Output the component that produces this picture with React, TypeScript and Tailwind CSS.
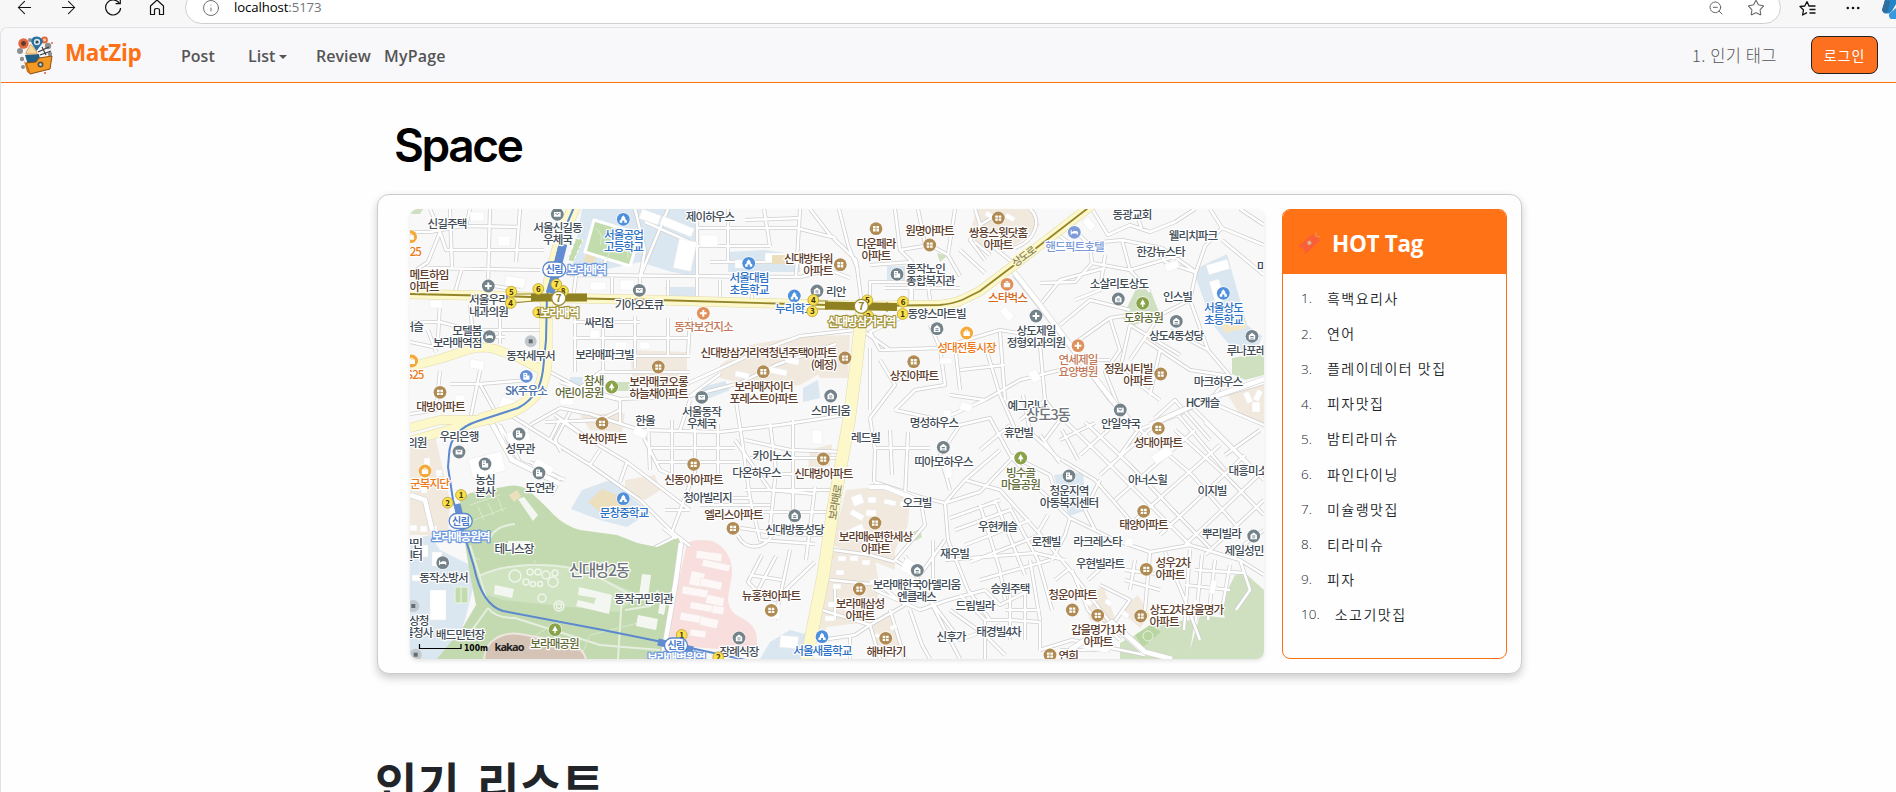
import React from "react";
import { ArrowLeft, ArrowRight, Info, Star, ZoomOut } from "lucide-react";

type Align = "start" | "middle" | "end";
type Label = [x: number, y: number, lines: string, align?: Align];

const MAP_FONT = '"Noto Sans CJK KR", "Noto Sans", sans-serif';

const minorRoads = [
  // north-west blocks
  "M410 232H430L462 226 520 227M430 209 440 232 428 262 410 274M450 209 452 268M490 209 488 285 520 290M466 226 470 209M520 209 516 262M425 268 540 270M440 232 446 250 544 250M462 268 455 292M488 250H540",
  "M410 322H440L470 330 545 330M428 330 436 352M440 303 438 338M470 305 474 345M500 312V344M450 337H505M410 342 438 348M480 371 470 420M440 371 436 410 410 414M480 384 528 380M450 384 480 384 500 420",
  "M575 312V372M603 316V372M635 316V368M668 318V356M573 338H690M573 322H640M603 356H690M690 318 688 356M573 300 576 275 800 277M612 277V300M640 277V300M668 280V300M697 277V303M720 280V303M752 280V303",
  "M635 209 645 250 640 277M668 209 640 277M697 209V277M728 209V262M697 228H800M697 246H770M710 262H800M745 220 800 218M764 209 770 246M800 209 796 277M645 222 690 242M615 232 600 277",
  "M550 372 580 388 620 399 690 396 740 383 776 365 836 344M560 382 595 394 620 400M620 400V424M580 388 600 372 690 372M655 398 700 378 750 355 800 336 855 330M690 396 720 374",
  "M560 408 590 414 640 430 720 432 780 425 845 415M570 412 555 440 561 452M530 425 560 408M620 410 600 420 545 422M690 400 680 430M735 395 742 440 750 498",
  // center blocks
  "M510 415 550 440 590 465 640 500 672 532M555 415 590 440 627 462 690 510M590 440 560 420 550 440M627 462 620 482M590 465 600 450M640 430 660 470 690 484M648 424 650 470M672 420V484M695 428V484M718 424V484M650 448H735M655 462H740M745 440 790 450 845 452M690 484 672 532M672 532 690 546M690 510H665M750 498H690M750 498 760 540 815 544",
  "M735 440 770 490 815 494M770 424 776 470 770 528M793 420V525M750 458H840M760 474H838M745 490H835M750 512H835M740 528 780 534 830 535M815 487 806 560M700 505H770M738 536C745 550 765 552 775 530M762 555 748 582 762 596M776 556 758 590M790 550 775 620M756 590 775 600 815 562M750 575 782 580",
  "M682 543 674 580 664 640M682 543 663 528M675 537 650 550 617 538M565 480 520 462 500 425M530 462 560 478 552 495M498 424 512 460",
  // north-center blocks
  "M800 229 836 238M810 209 830 235 856 260 862 305M839 209 848 245 858 270M895 209 900 250 912 262 910 305M870 265 912 262M900 250 930 245 948 255M918 209 925 245M955 209 948 255 960 276M870 300V282H912V302M885 288H960M925 262 930 300M850 278 830 270 800 277M960 250 985 273M975 209 985 240 1012 262",
  "M1030 209C1042 220 1036 240 1015 248M985 260 970 240 980 225 1000 213M990 255 975 242M1052 230 1072 245 1122 240 1162 248M1065 222 1090 245 1092 263 1075 282 1040 283M1092 209 1108 235 1130 225 1150 232 1175 222 1195 209M1092 263 1130 270 1180 255M1122 240 1130 270 1150 292M1105 255 1100 290 1075 300M1162 248 1196 272M1135 209 1142 230",
  "M1210 209 1222 228 1205 246 1196 272 1190 300 1208 350 1230 376M1222 228 1264 245M1240 209 1264 225M1222 240 1264 275M1195 272 1165 262 1160 250M1190 300 1160 315 1130 360M1170 330 1208 350",
  // east side
  "M1014 275 1038 305 1080 360 1110 400 1138 430M1040 305 1060 280 1105 268M1060 325 1090 300 1130 310M1072 345 1110 318 1150 312M1110 318 1120 350 1105 372 1118 405M1145 340 1190 370 1230 376M1130 325 1180 355M1130 325 1120 370 1160 400M1080 360 1110 360M1160 350 1150 395",
  "M900 318 870 332 880 350 940 348 1000 330 1030 335M862 330 890 350M940 348 945 385 915 390 895 410M930 325 940 348M870 348V410M880 360 895 385 870 418M895 410 940 420 985 400 1020 380 1060 370M985 345 1000 395 1020 440M1000 332 1005 400M1040 345 1045 400 1020 420M1045 400 1060 420 1045 440M950 395 985 400M955 345 960 390M960 370 1005 365",
  "M1138 430 1178 415 1205 400 1264 383M1138 430 1120 455M1155 418 1175 400 1210 440M1205 400 1264 425M1178 415 1225 470M1190 405 1250 465M1230 376 1210 400M1260 430 1225 455",
  // south-east grid
  "M1062 418 1105 460 1150 505 1190 545M1085 422 1130 465 1175 512 1210 548M1140 430 1192 475 1240 530M1175 430 1225 475 1264 515M1205 422 1264 480M1062 460 1095 480 1130 520M1060 440 1095 423M1080 455 1125 415M1100 475 1160 420M1115 500 1195 430M1135 520 1220 445M1160 535 1245 455M1185 545 1264 470M1205 555 1264 500M1230 555 1264 530",
  "M1023 395 1030 432 1060 460M1040 435 1060 463M1062 430 1078 460M1100 480 1085 510 1095 530M1070 518 1115 540 1150 552 1190 545 1240 560 1264 575M1150 552 1145 610M1135 560 1130 590M1165 552 1185 600 1200 640M1190 550 1184 630M1202 555 1196 620M1215 560 1208 620M1230 565 1221 615M1185 585 1230 590M1195 570 1245 573M1125 570 1165 575M1125 580 1160 590M1240 560 1250 590 1236 610",
  // south-center
  "M874 482 920 497 945 503 980 492 1015 455M870 418 875 450 874 482M890 430 892 475M908 432 905 497M874 448H930M945 503 965 480 1000 450M950 490 940 455 960 425 990 418 1010 455M980 450 1010 425M965 480 1000 490 1038 532 1070 570 1112 625 1145 655M1010 455 1040 490 1070 518M1010 455 1050 475 1060 505",
  "M945 503 948 540 968 590 990 620M955 530 1010 510M950 518 1000 500M980 505 1000 570 1005 600M995 500 1025 575M965 545 1030 520M970 562 1040 535M980 580 1050 560M1010 508 1038 560 1052 610M1030 560 1040 620M1048 515 1038 532M1070 518 1065 535 1052 560M1065 560 1035 553 945 560M1070 568 1055 580",
  "M920 497 925 525 895 560 920 575 945 540M905 556 930 600 950 640 960 659M933 540V580M875 590 920 610 948 600 985 590M910 610 922 645 930 659M950 610 985 635 1005 655M960 595 985 620 1010 620 1040 622V650M930 600 960 640 1000 625M985 590 1000 605 1030 590M985 620 985 659M1010 590V640M1025 590V640M1040 650 1072 640 1145 655M1005 610 1040 610",
  "M834 550 870 555 895 562M830 580 880 585 905 605M822 610 870 625 905 605M822 640 855 635 870 625M870 625 880 659M890 610 905 659M850 635V659M835 585V620M1072 570 1088 610 1120 640M1088 580 1110 560M1100 585 1130 600 1112 625M1110 650H1060",
];

const majorWhite = [
  "M1014 272 1040 305 1085 365 1112 400 1138 430",
  "M490 420 512 460 560 484",
  "M681 543 676 580 664 650",
  "M1264 379 1205 400 1150 425",
  "M869 487 885 487 920 501",
  "M410 495 425 500 432 530",
  "M1070 650 1112 622 1145 652 1172 659",
];

const blueAreas = [
  "M582 209H695V276L672 272 640 262 570 277Z",
  "M728 252 765 250 800 255V272H728Z",
  "M665 287H695V300H668Z",
  "M887 266H905V281H887Z",
  "M1193 270 1227 254 1247 325 1262 336 1256 352 1232 348 1213 325Z",
  "M571 509 582 490 610 480 650 512 627 527 600 520Z",
  "M410 540 430 535 440 550 470 565 475 580 465 620 450 659H410Z",
  "M1054 475 1083 472 1086 510 1070 516 1060 500Z",
  "M770 642 790 630 812 636 808 659H760Z",
  "M698 388 725 381 730 390 705 400Z",
  "M570 377 583 377 582 386 570 384Z",
  "M803 388 818 380 820 398 803 402Z",
];

const beigeAreas = [
  "M630 350 687 352V387L645 388 632 375Z",
  "M720 365 750 345 795 337 840 338 835 365 800 385 760 387 720 378Z",
  "M800 336 850 335 848 378 820 378Z",
  "M976 209H1030L1040 225 1010 250 980 248 970 235Z",
  "M410 440 435 435 450 500 448 535H410Z",
  "M846 490 876 487 910 500 908 525 895 550 895 570 832 545Z",
  "M832 550 875 560 880 590 868 622 818 628Z",
  "M866 625 890 610 902 645 885 659Z",
  "M810 450 832 444 830 466 808 468Z",
  "M580 415 625 413 622 432 590 430Z",
  "M625 480 655 475 660 490 645 500 625 490Z",
  "M1225 390 1264 380V428L1240 415Z",
  "M1080 590 1104 588 1120 632 1090 620Z",
  "M1120 610 1138 595 1150 615 1140 628Z",
  "M818 590 830 600 826 630 812 628Z",
];

const greenAreas = [
  "M410 209H423L420 214H410Z",
  "M1232 358 1264 353V375L1245 380 1232 374Z",
  "M1120 659V643L1160 622 1195 620 1190 650 1200 615 1225 618 1220 605 1235 575 1245 573 1264 590V659Z",
  "M1136 289H1150L1160 315 1132 326 1122 318Z",
  "M937 253 947 256 940 262Z",
  "M913 532 920 529 922 537 915 541Z",
  "M614 382H630V391H614Z",
];

const buildings: [number, number, number, number, number?][] = [
  [660, 222, 34, 9, 22], [676, 240, 18, 30, 12], [640, 212, 20, 10, 20], [700, 235, 18, 12],
  [470, 212, 14, 9], [498, 236, 12, 10], [430, 300, 12, 8], [505, 277, 20, 10, 8], [590, 282, 16, 8],
  [620, 280, 14, 10], [765, 253, 26, 9], [735, 260, 18, 8], [590, 330, 10, 9], [615, 342, 12, 8],
  [640, 342, 10, 7], [470, 360, 14, 9, 10], [455, 395, 10, 8], [560, 395, 14, 10], [500, 398, 14, 12, 20],
  [470, 455, 34, 20, -14], [508, 430, 22, 16, -14], [532, 462, 20, 15, 30], [633, 428, 14, 9, 25],
  [730, 392, 20, 8, -10], [745, 350, 14, 6, 12], [765, 352, 14, 6, 12], [785, 358, 14, 6, 12], [765, 368, 22, 6, 12],
  [735, 372, 14, 6, 12], [1207, 262, 22, 10, -16], [1212, 280, 10, 22, -16], [1165, 262, 14, 8, -20],
  [1085, 218, 8, 12, -40], [1060, 245, 8, 6, -40], [985, 213, 10, 5, 30], [1005, 215, 10, 5, 30], [982, 235, 10, 5, 15],
  [1015, 228, 10, 5, 15], [1245, 392, 6, 11, -25], [1255, 390, 6, 11, 25], [1252, 402, 8, 10],
  [852, 495, 11, 10, -20], [850, 512, 14, 6, 30], [868, 497, 8, 6], [884, 500, 12, 5, 12], [900, 502, 8, 5, 12],
  [866, 510, 10, 6], [846, 527, 18, 7, -25], [838, 556, 8, 5], [850, 556, 8, 5], [862, 560, 8, 5], [836, 570, 8, 5],
  [833, 584, 8, 5], [852, 586, 14, 5, 12], [870, 580, 7, 5], [828, 602, 8, 5], [843, 605, 8, 5], [825, 616, 9, 5],
  [1085, 600, 7, 5, 35], [1105, 600, 7, 5, 35], [1122, 612, 7, 5, 35], [1092, 612, 7, 5, 35], [875, 634, 7, 4, 25], [890, 625, 7, 4, -35],
  [410, 525, 7, 6], [420, 526, 7, 6], [430, 526, 7, 6], [413, 485, 6, 6], [421, 487, 6, 6], [436, 470, 6, 6], [424, 458, 6, 14],
  [420, 545, 8, 12], [432, 552, 10, 14], [430, 590, 16, 30], [412, 575, 24, 6], [780, 636, 18, 12, 5],
  [943, 410, 8, 10], [960, 403, 12, 8, 15], [940, 358, 12, 6], [1000, 310, 14, 8, 50], [1030, 370, 9, 12, -30],
  [1125, 538, 8, 8], [1152, 450, 20, 10, -35], [902, 560, 14, 14, 30], [1084, 635, 26, 16, 10], [1192, 600, 6, 16, 12], [1210, 580, 6, 14, 12],
  [770, 605, 10, 14], [820, 555, 8, 12], [812, 430, 10, 14], [945, 466, 7, 12], [960, 300, 10, 7, -30],
];

const hospitalBlocks: [number, number, number, number, number?][] = [
  [696, 552, 26, 8, 8], [702, 562, 28, 7, 12], [690, 572, 14, 14, 12], [682, 588, 26, 8, 10], [700, 580, 22, 8, 12],
  [706, 596, 18, 9, 12], [690, 604, 28, 7, 10], [680, 614, 24, 8, 10], [700, 618, 18, 9, 12], [712, 606, 12, 8, 10], [690, 630, 16, 7, 8],
];

const labelGroups: { fill: string; labels: Label[] }[] = [
  {
    fill: "#414c57",
    labels: [
      [447, 223.3, "신길주택", "middle"], [557.5, 227.5, "서울신길동|우체국"], [710, 217, "제이하우스"],
      [488.5, 300, "서울우리|내과의원"], [639, 305, "기아오토큐"], [599, 322.5, "싸리집"], [423, 326.5, "허슬", "end"],
      [481.5, 330.5, "모텔봄|보라매역점", "end"], [530.5, 355.5, "동작세무서"], [604.5, 354.5, "보라매파크빌"],
      [701.5, 411.5, "서울동작|우체국"], [830.5, 410.5, "스마티움"], [1132, 214.5, "동광교회"], [1193, 236, "웰리치파크"],
      [1160.5, 251.5, "한강뉴스타"], [906, 268.5, "동작노인|종합복지관", "start"], [826, 291.5, "리안", "start"],
      [1119, 283.5, "소살리토상도"], [1177.5, 296.5, "인스빌"], [1176, 335.5, "상도4동성당"], [1226.5, 351, "루나포레", "start"],
      [1257, 267, "마음", "start"], [907.5, 313.5, "동양스마트빌", "start"], [1036, 330.5, "상도제일|정형외과의원"],
      [1218, 381.5, "마크하우스"], [1202.5, 402.5, "HC캐슬"], [1027, 405.5, "예그리나"], [645, 420.5, "한울"],
      [459, 436.5, "우리은행"], [426.5, 443, "의원", "end"], [520, 448.5, "성무관"], [485, 479.5, "농심|본사"],
      [539.5, 488, "도연관"], [772, 456, "카이노스"], [756.5, 472.5, "다온하우스"], [707.5, 498, "청아빌리지"],
      [794.5, 530, "신대방동성당"], [422, 543.5, "구민|센터", "end"], [514, 549, "테니스장"], [443.5, 577.5, "동작소방서"],
      [643.5, 599, "동작구민회관"], [428.5, 621, "상청", "end"], [432.5, 632.5, "를청사", "end"], [460, 635, "배드민턴장"],
      [739, 651.5, "장례식장"], [865.5, 437.5, "레드빌"], [934, 422.5, "명성하우스"], [1018.5, 432.5, "휴먼빌"],
      [1120.5, 424, "안일약국"], [943.5, 461.5, "띠아모하우스"], [1069, 491, "청운지역|아동복지센터"], [1147.5, 479.5, "아너스힐"],
      [1228.5, 470.5, "대흥미소", "start"], [1212, 491, "이지빌"], [917, 502.5, "오크빌"], [997.5, 526.5, "우현캐슬"],
      [1046, 541.5, "로젠빌"], [1097.5, 541.5, "라크레스타"], [1221.5, 533.5, "뿌리빌라"], [1224.5, 550.5, "제일성민", "start"],
      [954.5, 553.5, "재우빌"], [1100, 563.5, "우현빌라트"], [916.5, 585, "보라매한국아델리움|엔클래스"], [1010, 588.5, "승원주택"],
      [975, 605.5, "드림빌라"], [951, 637, "신후가"], [998.5, 631.5, "태경빌4차"],
    ],
  },
  {
    fill: "#5d3d2c",
    labels: [
      [832.5, 259, "신대방타워|아파트", "end"], [409.5, 275, "메트하임|아파트", "start"], [836.5, 352.5, "신대방삼거리역청년주택아파트|(예정)", "end"],
      [658.5, 381.5, "보라매코오롱|하늘채아파트"], [440.5, 407, "대방아파트"], [763.5, 386.5, "보라매자이더|포레스트아파트"],
      [876, 243.5, "다운페라|아파트"], [929.5, 230.5, "원명아파트"], [998, 232.5, "쌍용스윗닷홈|아파트"], [1152.5, 368.5, "정원시티빌|아파트", "end"],
      [914, 376, "상진아파트"], [602.5, 438.5, "벽산아파트"], [693.5, 479.5, "신동아아파트"], [852.5, 473.5, "신대방아파트", "end"],
      [733.5, 514.5, "엘리스아파트"], [771, 595.5, "뉴홍현아파트"], [1158, 443, "성대아파트"], [1143.5, 525, "태양아파트"],
      [875.5, 537, "보라매e편한세상|아파트"], [1155.5, 563, "성우2차|아파트", "start"], [1072.5, 594.5, "청운아파트"],
      [1149.5, 610, "상도2차갑을명가|아파트", "start"], [860, 603.5, "보라매삼성|아파트"], [1098, 630, "갑을명가1차|아파트"],
      [886, 652, "해바라기"], [1058.5, 655.5, "연희", "start"],
    ],
  },
  {
    fill: "#2c70c6",
    labels: [
      [623.5, 234.5, "서울공업|고등학교"], [749, 278, "서울대림|초등학교"], [775, 309, "누리학교", "start"], [1223.5, 308, "서울상도|초등학교"],
      [624, 512.5, "문창중학교"], [851.5, 651, "서울새롬학교", "end"],
    ],
  },
  { fill: "#4a6fa8", labels: [[526, 390.7, "SK주유소"]] },
  { fill: "#7c9ad8", labels: [[1074.5, 247, "핸드픽트호텔"]] },
  { fill: "#c27958", labels: [[703.5, 327, "동작보건지소"], [1078, 360, "연세제일|요양병원"]] },
  { fill: "#d5681c", labels: [[1007.5, 297.5, "스타벅스"]] },
  { fill: "#ec7a1a", labels: [[966.5, 347.5, "성대전통시장"], [410, 484, "군복지단", "start"], [421, 251.5, "S25", "end"], [423.5, 375, "S25", "end"]] },
  { fill: "#5f6b38", labels: [[603.5, 381, "참새|어린이공원", "end"], [1143.5, 317.5, "도화공원"], [1020.5, 473, "빙수골|마을공원"], [554.5, 644, "보라매공원"]] },
];

type Kind = "apt" | "school" | "plus" | "home" | "office" | "tree" | "bag" | "bed" | "mail";

const pinGroups: { fill: string; kind: Kind; at: [number, number][] }[] = [
  {
    fill: "#b08c54", kind: "apt",
    at: [[658.3, 367], [440, 392.3], [763.3, 371.7], [876, 228.7], [929.7, 245], [998.3, 218], [840.3, 264.7], [1160.7, 374], [913.7, 361.7], [845, 358], [602, 423.3], [693.7, 464.3], [823.3, 459], [733, 528.3], [771.3, 610.3], [1158.3, 428.3], [1143.7, 511.3], [875, 523], [1146.3, 569.3], [859.3, 589], [1072.3, 610], [1097.7, 615.3], [1140.7, 616], [885.7, 638.3], [1050, 655]],
  },
  { fill: "#4f8fdc", kind: "school", at: [[623.3, 219.3], [748.7, 263.3], [794.3, 296], [1223.3, 293.3], [623.3, 498.7], [822, 636.7]] },
  { fill: "#74828a", kind: "plus", at: [[488.3, 286], [1036, 316]] },
  { fill: "#e0905c", kind: "plus", at: [[703.3, 313.3], [1078, 345.7]] },
  { fill: "#e0905c", kind: "bag", at: [[1007, 284.3]] },
  { fill: "#f4aa3a", kind: "bag", at: [[410.7, 236.7], [411.7, 361], [966.7, 333], [425, 471]] },
  { fill: "#74828a", kind: "home", at: [[817, 291], [937, 328.7], [1118.3, 299], [1176.3, 321.3], [1252, 336.3], [830.7, 396], [943.3, 447.3], [917.3, 570.3], [794.7, 515.7], [1253.7, 536], [739, 638]] },
  { fill: "#74828a", kind: "office", at: [[897, 274.3], [519, 434], [485, 464], [539, 473], [1069, 476]] },
  { fill: "#74828a", kind: "mail", at: [[557.3, 214.3], [639.3, 290.3], [701.7, 397.3], [459, 452], [1120.3, 410]] },
  { fill: "#74828a", kind: "bed", at: [[489.3, 336.7], [442.7, 562.7]] },
  { fill: "#7f9cda", kind: "bed", at: [[1074.3, 232.3]] },
  { fill: "#6691d6", kind: "office", at: [[526.3, 376.3]] },
  { fill: "#8aa24a", kind: "tree", at: [[611.7, 387], [1142.7, 303.3], [1020.7, 458], [555, 629.7]] },
];

const glyphs: Record<Kind, React.ReactNode> = {
  apt: <path d="M-3-2.6h2.6v2.3H-3zM.4-2.6H3v2.3H.4zM-3 .4h2.6v2.3H-3zM.4.4H3v2.3H.4z" />,
  school: <path d="M0-4 2-1.6V0l1.6 1.2V3.4H1V1.2H-1V3.4H-3.6V1.2L-2 0V-1.6Z" />,
  plus: <path d="M-1-3.4H1V-1H3.4V1H1V3.4H-1V1H-3.4V-1H-1Z" />,
  home: <path fillRule="evenodd" d="M0-3.6 3.2-1V3.2H-3.2V-1ZM-1.6-.4V.6H1.6V-.4ZM-1.6 1.4V2.2H1.6V1.4Z" />,
  office: <path fillRule="evenodd" d="M-3-3.4H1V-.8H3.2V3.4H-3ZM-1.8-2.2V-1.2H-.4V-2.2ZM-1.8 0V1H-.4V0Z" />,
  tree: <path d="M0-4 2.8 1.2H.7V3.6H-.7V1.2H-2.8Z" />,
  bag: <path fillRule="evenodd" d="M-3.2-1.4H-1.8L-1-3.2H1L1.8-1.4H3.2V3H-3.2ZM-.8-1.4H.8L.4-2.4H-.4Z" />,
  bed: <path d="M-3.6-2.2h1V0L-.6-1.4H2.4L3.6-.2V2.4H2.6V1.2H-2.6V2.4H-3.6Z" />,
  mail: <path fillRule="evenodd" d="M-3.4-2.2H3.4V2.4H-3.4ZM-2.4-1.2 0 .8 2.4-1.2 1.4-1.4 0-.4-1.4-1.4Z" />,
};

const exits: [number, number, string][] = [
  [511.3, 291.7, "5"], [510.7, 303, "4"], [538.3, 289, "6"], [563, 291, "8"], [556.3, 284.3, "7"], [538.3, 312.3, "1"],
  [813.3, 300, "4"], [812.3, 311.3, "3"], [867.3, 300.3, "5"], [868.3, 316, "2"], [903, 301.7, "6"], [902.7, 314, "1"],
  [461, 495, "1"], [447.7, 502.7, "2"], [681.7, 635, "1"], [718.3, 657.3, "2"],
];

const YELLOW_EW = "M410 294 500 296 560 298 656 300 793 304 862 306 940 305Q952 304 962 300L980 291 1013 266 1092 205";
const BLUE_ROAD = "M575 205 562 235 550 280 546 310 546 360Q545 378 539 389 530 402 516 409L480 420";
const YELLOW_W = "M410 428 440 420 490 420 520 408M410 441 455 428 510 414 528 403M410 367 443 358 470 349Q483 346 495 349L517 357 542 370";
const YELLOW_NS = "M862 310 856 367 849 420 833 510 823 577 806 662";
const BLUE_LINE = "M575 205 562 235 547 295 546 340 543 370Q541 384 537 390 530 402 518 408L478 421Q450 430 449 455L448 467 453 500 465 537 474 567Q482 605 503 611L603 630 677 645 750 661";

function TextBlock({ x, y, lines, align = "middle" }: { x: number; y: number; lines: string; align?: Align }) {
  return (
    <text textAnchor={align} y={y + 4.4}>
      {lines.split("|").map((line, i) => (
        <tspan key={i} x={x} y={y + 4.4 + i * 11.8}>{line}</tspan>
      ))}
    </text>
  );
}

function Boxes({ items, fill, stroke }: { items: [number, number, number, number, number?][]; fill: string; stroke: string }) {
  return (
    <g fill={fill} stroke={stroke} strokeWidth="0.5">
      {items.map(([x, y, w, h, r = 0], i) => (
        <rect key={i} x={x} y={y} width={w} height={h} transform={`rotate(${r} ${x + w / 2} ${y + h / 2})`} />
      ))}
    </g>
  );
}

function LineBadge({ x, y }: { x: number; y: number }) {
  return (
    <g>
      <rect x={x - 11.5} y={y - 7.5} width="23" height="15" rx="7.5" fill="#fff" stroke="#5b86cc" strokeWidth="1.3" />
      <text x={x} y={y + 3.8} textAnchor="middle" fontSize="10" fontWeight="700" fill="#4a7bc8" letterSpacing="-0.6">신림</text>
    </g>
  );
}

function KakaoMap() {
  return (
    <svg viewBox="410 209 854 450" className="block h-[450px] w-[854px] shrink-0 rounded-lg bg-[#f8f8f8] shadow-[0_2px_4px_rgba(0,0,0,0.1)]" fontFamily={MAP_FONT}>
      <rect x="410" y="209" width="854" height="450" fill="#f8f8f8" />
      <g fill="#dae6f0">{blueAreas.map((d) => <path key={d} d={d} />)}</g>
      <g fill="#f1e9de">{beigeAreas.map((d) => <path key={d} d={d} />)}</g>
      <g fill="#cfe0c1">{greenAreas.map((d) => <path key={d} d={d} />)}</g>
      <path d="M687 543Q697 538 712 541 733 550 732 575L728 597Q728 612 740 617 757 625 757 640V652L665 645 672 610Z" fill="#f8dfdd" />

      <g fill="none" strokeLinejoin="round">
        <g stroke="#cecece" strokeWidth="4">{minorRoads.map((d) => <path key={d} d={d} />)}</g>
        <g stroke="#fff" strokeWidth="2.5">{minorRoads.map((d) => <path key={d} d={d} />)}</g>
      </g>
      <Boxes items={buildings} fill="#fff" stroke="#e9e9e9" />
      <Boxes items={hospitalBlocks} fill="#fdf8f7" stroke="#eadfdd" />

      {/* school field */}
      <path d="M594 220 640 234 630 266 585 252Z" fill="#c3dcae" stroke="#fff" strokeWidth="3" strokeLinejoin="round" />
      <path d="M618 227 607 259M596 229q8 4 4 16M634 240q-8 4-6 18" fill="none" stroke="#dbeacf" />
      <path d="M576 238 583 240 573 262 568 260Z" fill="#c3dcae" stroke="#fff" strokeDasharray="4 2" />
      <path d="M586 254 596 257 593 264 584 261Z" fill="#ecdfbd" />
      <path d="M772 255H785V264H772Z" fill="#ecdfbd" />
      <path d="M588 502 602 489 630 500 620 518 600 512Z" fill="#ecdfbd" />
      <path d="M1220 325 1244 318 1246 328 1226 333Z" fill="#f5e7c4" />

      {/* park */}
      <path d="M460 500 470 493 503 487Q517 483 528 490 545 505 553 514 565 526 580 530L617 535 637 543 657 547 678 538 682 545 676 580 664 640 660 659H437L463 627 476 605 470 575 465 543Z" fill="#c3dab0" />
      <path d="M479 576Q500 567 530 565 565 563 590 573L640 595 618 612 503 600 487 595Z" fill="#cfe3c0" />
      <g fill="none" stroke="#e6efdf" strokeWidth="2">
        <path d="M479 576Q500 566 530 565 575 564 600 578L640 600M622 595 618 659M488 608 465 640M488 608Q495 618 515 618L600 645 660 650M490 538Q495 526 515 524M470 545 487 600M625 610 650 606 658 590" />
      </g>
      <g fill="none" stroke="#d8e8cc" strokeWidth="1">
        <path d="M470 505 500 495M474 520 506 508M478 507 484 520M488 503 494 516M498 498 503 512M520 645 560 620M580 659 590 635 650 620M480 560 470 555M530 585 535 560" />
      </g>
      <g fill="none" stroke="#f0f5ec" strokeWidth="1.5">
        <circle cx="515" cy="576" r="6" />
        <circle cx="530" cy="572" r="3" /><circle cx="538" cy="572" r="3" /><circle cx="546" cy="575" r="4" />
        <circle cx="555" cy="573" r="3" /><circle cx="526" cy="582" r="3" /><circle cx="533" cy="584" r="2.5" />
        <circle cx="540" cy="584" r="2.5" /><circle cx="553" cy="582" r="5" /><circle cx="542" cy="598" r="4" />
        <circle cx="559" cy="606" r="5" /><circle cx="559" cy="606" r="2.5" />
      </g>
      <g fill="#f4f7f1">
        <path d="M495 585 514 589 512 598 494 594Z" /><path d="M579 587 612 595 609 614 576 606 578 600 594 604 596 598 578 595Z" />
        <path d="M642 574 651 575 648 597 639 596Z" /><path d="M638 615 658 619 656 630 636 626Z" />
        <path d="M518 499 524 497 538 515 533 521Z" /><path d="M660 603 666 605 664 615 658 613Z" /><path d="M508 541H530V550H508Z" />
      </g>
      <path d="M509 495 517 490 521 496 514 502Z" fill="#ecdfbd" />
      <path d="M455 587H468V603H455ZM461 587V603" fill="#c3dcae" stroke="#eef5e8" />
      <path d="M484 660Q485 645 495 639 505 632 520 634L570 643Q585 650 586 660Z" fill="#d5c4b6" stroke="#eee6df" strokeWidth="2" />
      <path d="M1135 635 1150 625 1161 632 1143 647Z" fill="#b9d6a2" />
      <circle cx="1148" cy="636" r="5" fill="none" stroke="#e8f1e0" />

      <g fill="none" strokeLinejoin="round">
        <g stroke="#d4d4d4" strokeWidth="6">{majorWhite.map((d) => <path key={d} d={d} />)}</g>
        <g stroke="#fff" strokeWidth="4.6">{majorWhite.map((d) => <path key={d} d={d} />)}</g>
        <g stroke="#dfd9b0">
          <path d={YELLOW_W} strokeWidth="9.5" /><path d={YELLOW_NS} strokeWidth="13" />
          <path d={BLUE_ROAD} strokeWidth="13" /><path d={YELLOW_EW} strokeWidth="10" />
        </g>
        <g stroke="#fdf8c9">
          <path d={YELLOW_W} strokeWidth="8.5" /><path d={YELLOW_NS} strokeWidth="12" />
          <path d={BLUE_ROAD} strokeWidth="12" /><path d={YELLOW_EW} strokeWidth="9" />
        </g>
        <path d={BLUE_LINE} stroke="#5b88cf" strokeWidth="2" />
        <path d={YELLOW_EW} stroke="#94842a" strokeWidth="1.8" />
        <path d="M563 244 554 280 550 293" stroke="#628dd2" strokeWidth="8.5" />
        <path d="M457 504 463 530" stroke="#628dd2" strokeWidth="7" />
        <path d="M658 642 693 650" stroke="#628dd2" strokeWidth="7" />
        <path d="M513 294H535M513 303 533 301M815 301H828M815 309H828M887 302V312M895 303V311" stroke="#94842a" strokeWidth="1" />
        <path d="M531 297.5H587M825 305.5 897 307" stroke="#8f8021" strokeWidth="8" />
      </g>

      <g>
        {pinGroups.map(({ fill, kind, at }) =>
          at.map(([x, y]) => (
            <g key={`${x}-${y}`} transform={`translate(${x} ${y})`}>
              <circle r="7" fill="#fff" opacity="0.8" />
              <circle r="6.4" fill={fill} />
              <g fill="#fff">{glyphs[kind]}</g>
            </g>
          )),
        )}
        {[[530.7, 341.3], [413.3, 606], [415.7, 654.7]].map(([x, y]) => (
          <g key={x}>
            <circle cx={x} cy={y} r="6" fill="#c3c8cc" />
            <rect x={x - 2} y={y - 2} width="4" height="4" fill="#646d74" />
          </g>
        ))}
      </g>

      <g fontSize="11.6" fontWeight="500" letterSpacing="-0.95" stroke="#fff" strokeWidth="2.4" strokeLinejoin="round" paintOrder="stroke">
        {labelGroups.map(({ fill, labels }) => (
          <g key={fill} fill={fill}>
            {labels.map(([x, y, lines, align]) => <TextBlock key={`${x}-${y}`} x={x} y={y} lines={lines} align={align} />)}
          </g>
        ))}
        <g fill="#6f757b" fontSize="15.5" letterSpacing="-1.2">
          <text x="599" y="575.5" textAnchor="middle">신대방2동</text>
          <text x="1048" y="419.5" textAnchor="middle" fontSize="14.5">상도3동</text>
        </g>
        <g fill="#8b8560" fontSize="10.5" stroke="#fdf8c9">
          <text textAnchor="middle" transform="translate(1026 259.5) rotate(-37)">상도로</text>
          <text textAnchor="middle" transform="translate(839 503) rotate(-80)">보라매로</text>
        </g>
      </g>

      <g>
        {exits.map(([x, y, n]) => (
          <g key={`${x}-${y}`}>
            <circle cx={x} cy={y} r="5.4" fill="#fbe04d" stroke="#b9a12e" strokeWidth="0.8" />
            <text x={x} y={y + 2.9} textAnchor="middle" fontSize="8" fontWeight="700" fill="#3c3310">{n}</text>
          </g>
        ))}
        {[[558.7, 298.3], [861.3, 306.3]].map(([x, y]) => (
          <g key={x}>
            <circle cx={x} cy={y} r="7" fill="#fff" stroke="#9b8c33" strokeWidth="1.3" />
            <text x={x} y={y + 3.8} textAnchor="middle" fontSize="10.5" fontWeight="700" fill="#8f8021">7</text>
          </g>
        ))}
        <LineBadge x={554.3} y={269.5} />
        <LineBadge x={460.7} y={521} />
        <LineBadge x={676} y={645.5} />
      </g>

      <g fontSize="11.8" fontWeight="700" letterSpacing="-1.2" strokeWidth="2.4" strokeLinejoin="round" paintOrder="stroke" fill="#fff">
        <g stroke="#6b96dc">
          <text x="567" y="274">보라매역</text>
          <text x="460.5" y="541" textAnchor="middle">보라매공원역</text>
          <text x="676" y="662" textAnchor="middle">보라매병원역</text>
        </g>
        <g stroke="#a39338">
          <text x="559" y="317" textAnchor="middle">보라매역</text>
          <text x="861.5" y="326" textAnchor="middle">신대방삼거리역</text>
        </g>
      </g>

      <path d="M419.5 644V648.5H461V644" fill="none" stroke="#000" strokeWidth="1.2" />
      <text x="464" y="651.2" fontSize="9.5" fontWeight="700" fill="#000" fontFamily='"DejaVu Sans", sans-serif' textLength="24" lengthAdjust="spacingAndGlyphs">100m</text>
      <text x="494.5" y="650.5" fontSize="11" fontWeight="700" fill="#222" fontFamily='"Open Sans", sans-serif' textLength="30">kakao</text>
    </svg>
  );
}

function LogoMark() {
  return (
    <svg viewBox="0 0 38 40" className="h-10 w-[38px] shrink-0">
      <g fill="#8d8f90">
        <circle cx="4" cy="16" r="3" /><circle cx="6" cy="24" r="2.2" /><circle cx="32" cy="11" r="3.2" /><circle cx="34" cy="19" r="2.2" /><circle cx="7" cy="32" r="2" /><circle cx="14" cy="5" r="2" />
      </g>
      <g fill="#e2673c"><circle cx="7.5" cy="8.5" r="5.2" /><circle cx="28.5" cy="5" r="3.4" /><circle cx="29" cy="38" r="1.1" /><circle cx="36" cy="8" r="1" /></g>
      <circle cx="7.5" cy="8.5" r="2.4" fill="#5b3a35" />
      <circle cx="28.5" cy="5" r="1.4" fill="#f7d9b0" />
      <path d="M20.5 1.5c-4 0-6 3-5 6.500l5 8 6-8c1-3.500-2-6.500-6-6.500Z" fill="#27709d" />
      <circle cx="21" cy="7" r="3.2" fill="#d8e6ea" /><circle cx="21" cy="7" r="1.6" fill="#27485f" />
      <path d="M22 17 33 12M24 20 35 16M26 12 30 20" stroke="#3b3b3b" strokeWidth="1.2" />
      <path d="M9 20 23 19 25 30H12Z" fill="#215f86" />
      <path d="M10 19c0-3 2-4 3-7 1-3 2-3 3-1 2 2 5 5 5 8Z" fill="#f6d9a2" stroke="#d88a35" strokeWidth=".8" />
      <path d="M10 28 20 27 23 23 36 21 34 34 14 39Z" fill="#f49a22" stroke="#8d4b17" strokeWidth="1" />
      <path d="M10 28 14 39 11 37 8 26Z" fill="#d97416" />
      <circle cx="24.5" cy="29.5" r="3" fill="#5a5146" /><circle cx="24.5" cy="29.5" r="1.2" fill="#d4e0df" />
    </svg>
  );
}

function BrowserBar() {
  return (
    <div className="flex h-[27px] items-start bg-[#f7f7f7] pl-[14px] text-[#111]">
      <ArrowLeft className="-mt-[3px] h-[21px] w-[21px]" strokeWidth={1.2} />
      <ArrowRight className="-mt-[3px] ml-[23px] h-[21px] w-[21px]" strokeWidth={1.2} />
      <svg viewBox="0 0 18 18" className="-mt-[2px] ml-[25px] h-[18px] w-[18px]" fill="none" stroke="#111" strokeWidth="1.2">
        <path d="M15.5 5.5A7.5 7.5 0 1 0 16.6 10M16.3 1V5.7H11.6" />
      </svg>
      <svg viewBox="0 0 16 18" className="-mt-[2px] ml-[27px] h-[18px] w-4" fill="none" stroke="#111" strokeWidth="1.2" strokeLinejoin="round">
        <path d="M1.5 8 8 2 14.5 8V16.5H10.5V12Q10.5 10.5 8 10.5T5.5 12V16.5H1.5Z" />
      </svg>
      <div className="-mt-[9px] ml-[20px] flex h-[33px] w-[1596px] items-center rounded-full border border-[#cfcfcf] bg-white pt-[1px] pl-4">
        <Info className="h-[18px] w-[18px] text-[#6b6b6b]" strokeWidth={1.3} />
        <span className="ml-[14px] font-['Open_Sans'] text-[13.2px] tracking-[-0.1px] text-black">localhost<span className="text-[#757575]">:5173</span></span>
        <ZoomOut className="ml-auto h-4 w-4 text-[#666]" strokeWidth={1.5} />
        <Star className="mr-[15px] ml-[23px] h-[18px] w-[18px] text-[#666]" strokeWidth={1.4} />
      </div>
      <svg viewBox="0 0 18 18" className="ml-[18px] h-[18px] w-[18px]" fill="none" stroke="#111" strokeWidth="1.3" strokeLinejoin="round">
        <path d="M9.5 6H15.5M8 1.5 5.8 6 1 6.5 4.5 10 3.6 15 8 12.6M8 1.5 10 6M11 6H16.5M10.5 9.5H16.5M10.5 13H16.5" />
      </svg>
      <svg viewBox="0 0 14 4" className="mt-[6px] ml-[29px] h-1 w-[14px]" fill="#111">
        <circle cx="1.8" cy="2" r="1.3" /><circle cx="7" cy="2" r="1.3" /><circle cx="12.2" cy="2" r="1.3" />
      </svg>
      <svg viewBox="0 0 14 19" className="ml-auto h-[19px] w-[14px]">
        <path d="M3 0H14V4L10 11 8 13Q1 15 0 10Z" fill="#2384c6" />
        <path d="M0 10 3 0 8 1 6 11 3 13.5Z" fill="#2f6f9e" />
        <path d="M7 14 14 8V19H9Q6.500 18 7 14Z" fill="#3a98dc" />
      </svg>
    </div>
  );
}

const tags = ["흑백요리사", "연어", "플레이데이터 맛집", "피자맛집", "밤티라미슈", "파인다이닝", "미슐랭맛집", "티라미슈", "피자", "소고기맛집"];

export default function App() {
  return (
    <div className="h-[792px] overflow-hidden bg-[#f7f7f7] font-['Open_Sans','Noto_Sans_CJK_KR',sans-serif]">
      <BrowserBar />
      <div className="h-[765px] overflow-hidden rounded-tl-lg border-t border-l border-[#e2e2e2] bg-[#fefefe]">
        <nav className="flex h-[55px] items-center border-b border-[#fd7014] bg-[#f8f8fb] pr-[18px] pl-[15px] text-base font-semibold text-[#555]">
          <LogoMark />
          <span className="ml-[11px] w-[116px] -translate-y-[2px] text-[22.5px] font-bold tracking-[-0.4px] text-[#fd7014]">MatZip</span>
          <span className="w-[67px] pt-[2px]">Post</span>
          <span className="flex w-[68px] items-center pt-[2px]">
            List
            <svg viewBox="0 0 8 4" className="mt-px ml-1 h-1 w-2" fill="#555"><path d="M0 0H8L4 4Z" /></svg>
          </span>
          <span className="w-[68px] pt-[2px]">Review</span>
          <span className="pt-[2px] tracking-[0.2px]">MyPage</span>
          <span className="ml-auto font-['Noto_Sans_CJK_KR'] text-[16.5px] font-light tracking-[0.5px] text-[#555]">1. 인기 태그</span>
          <button className="ml-[34px] h-[38px] w-[67px] rounded-lg border border-[#222] bg-[#fd7020] font-['Noto_Sans_CJK_KR'] text-[14px] font-normal tracking-[0.9px] text-white">로그인</button>
        </nav>

        <h1 className="mt-[31px] ml-[393px] h-[63px] font-['Inter'] text-[46px] leading-[62px] font-semibold tracking-[-2.4px] text-black">Space</h1>

        <section className="mt-[17px] ml-[376px] flex h-[480px] w-[1145px] rounded-xl border border-[#ccc] bg-[#fefefe] pt-[14px] pl-[32px] shadow-[0_4px_8px_rgba(0,0,0,0.2)]">
          <KakaoMap />
          <aside className="ml-[18px] h-[450px] w-[225px] overflow-hidden rounded-lg border border-[#fd7014] bg-[#fefefe]">
            <header className="flex h-16 items-center bg-[#ff7216] pl-[15px]">
              <svg viewBox="0 0 23 24" className="mt-1 h-6 w-[23px] shrink-0">
                <path d="M0 14.500 14.500 2Q16 5 19 4.500L22 8.500 7 22.500 6.500 17.500Z" fill="#fa5f38" />
                <path d="M12 8.500 13.800 11 12 13 9.500 12.500 9.500 9.500Z" fill="#d3b795" />
                <path d="M18 0V4.500H22" fill="none" stroke="#e8935a" />
              </svg>
              <h2 className="mt-[3px] ml-[11px] text-[22.5px] font-bold tracking-[-0.3px] text-white">HOT Tag</h2>
            </header>
            <ol className="pt-[7px] pl-[18px] font-['Noto_Sans_CJK_KR'] text-[14px] font-[350] tracking-[1.5px] text-[#212529]">
              {tags.map((tag, i) => (
                <li key={tag} className="flex h-[35.1px] items-center">
                  <span className="mr-[15px] font-['Open_Sans'] text-[13.5px] tracking-normal">{i + 1}.</span>
                  {tag}
                </li>
              ))}
            </ol>
          </aside>
        </section>

        <h2 className="mt-[77px] ml-[374px] font-['Noto_Sans_CJK_KR'] text-[46px] leading-[60px] font-bold [word-spacing:7px] text-[#212529]">인기 리스트</h2>
      </div>
    </div>
  );
}
